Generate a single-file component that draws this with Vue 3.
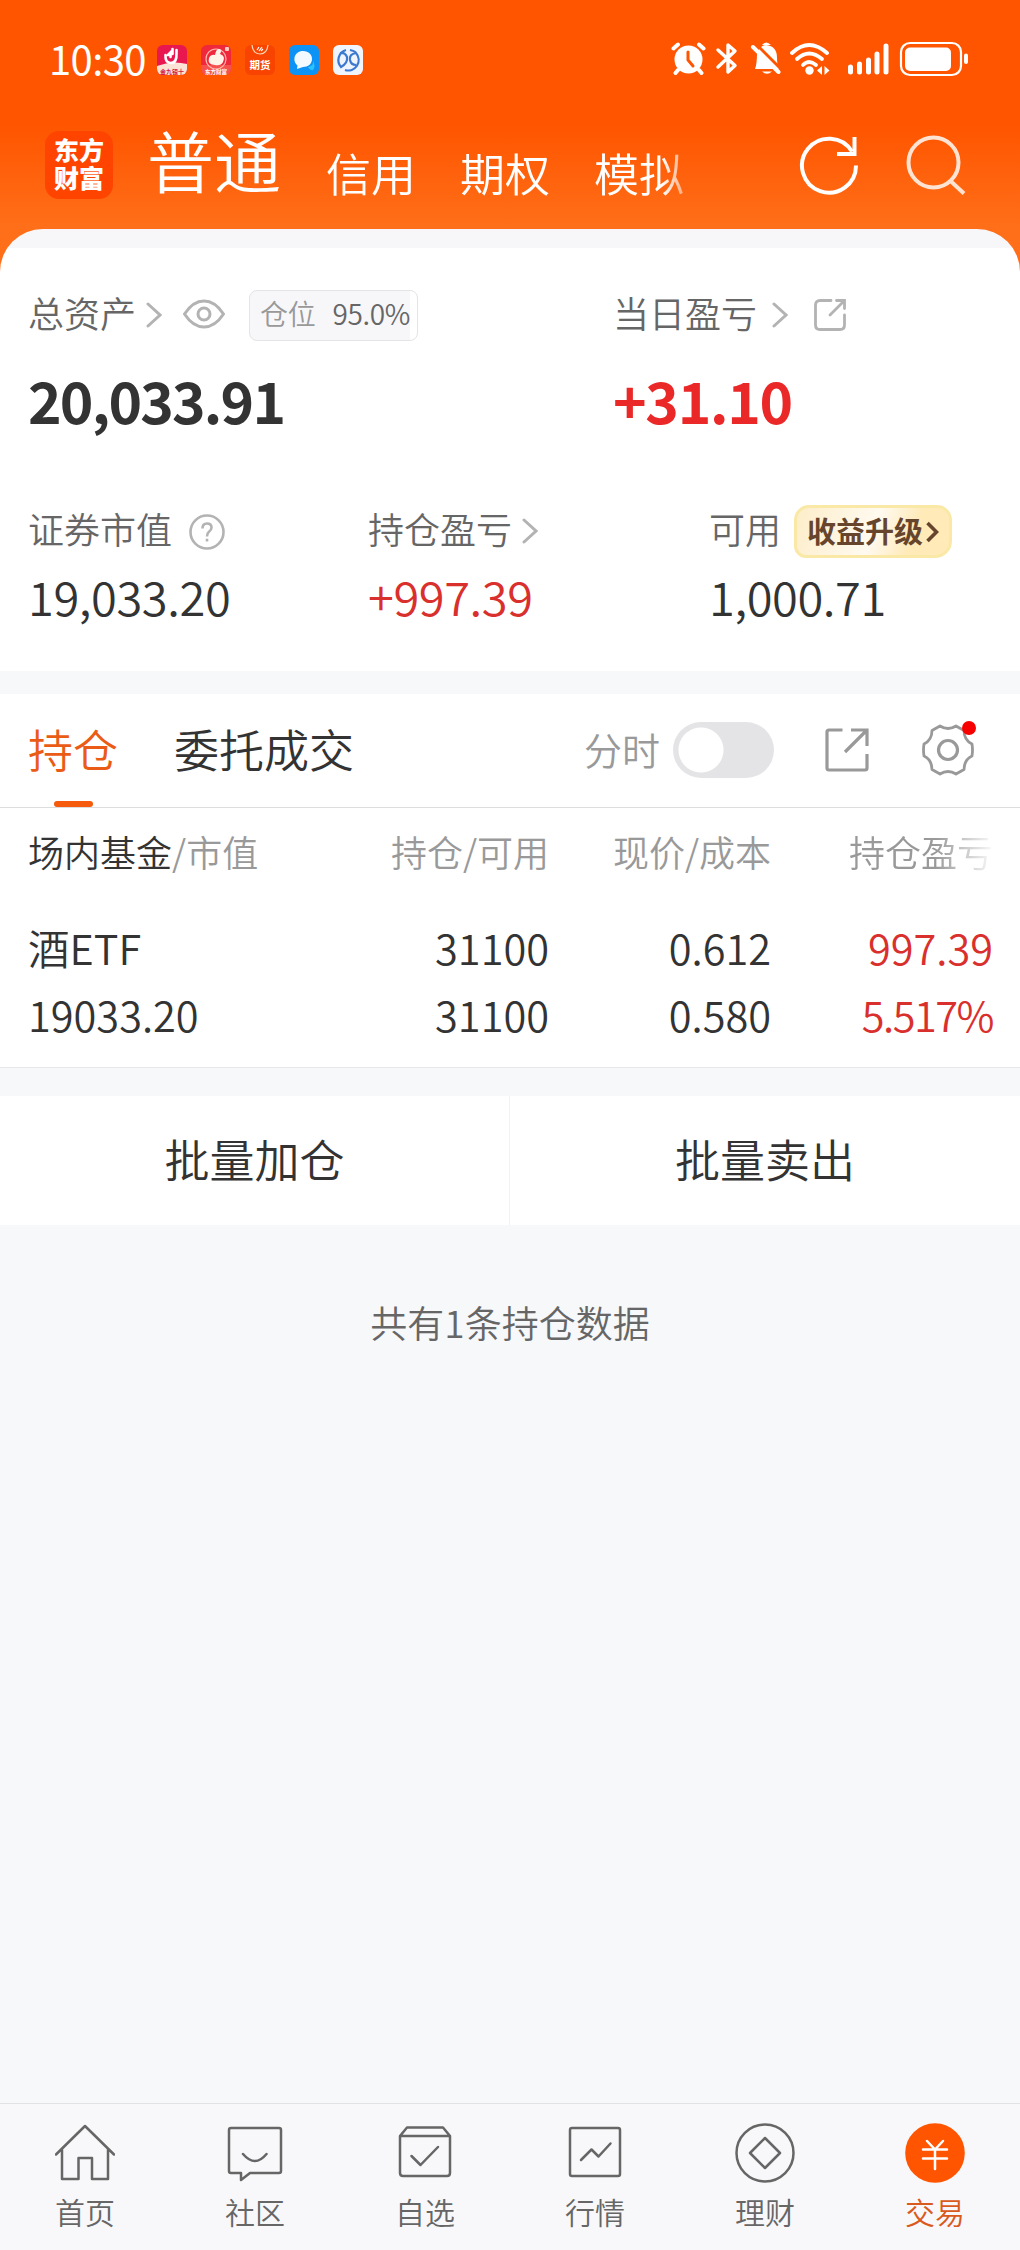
<template>
  <div class="page">
    <div class="status-bar">
      <span class="time">10:30</span>
      <div class="app-badges">
        <svg viewBox="0 0 30 30">
          <rect width="30" height="30" rx="6" fill="#e8174f" />
          <path d="M0 21 Q15 15 30 19 V24 a6 6 0 0 1 -6 6 H6 a6 6 0 0 1 -6 -6z" fill="#fbe3d6" />
          <path d="M8.500 10 Q8 18 14 18 Q20 18 19.500 8 L19.500 5 M15.500 9 V4 M11 10 L13.500 7.500 V12" fill="none" stroke="#fff" stroke-width="2.600" stroke-linecap="round" />
          <text x="15" y="28.500" font-size="6" font-weight="700" text-anchor="middle" fill="#d31748">金九银十</text>
        </svg>
        <svg viewBox="0 0 30 30">
          <rect width="30" height="30" rx="6" fill="#f0283c" />
          <path d="M0 20 H30 V24 a6 6 0 0 1 -6 6 H6 a6 6 0 0 1 -6 -6z" fill="#f5514f" />
          <circle cx="15" cy="14" r="10" fill="none" stroke="#ffb9ae" stroke-width="1.2" />
          <path d="M14 10 Q15 3 19 4 Q21 6 19 9 Q25 11 22 17 Q20 21 14 20 Q6 20 8 13 Q10 9 14 10z" fill="#fff3e8" />
          <rect x="24" y="2" width="4" height="4" rx="1" fill="#ffc8bd" />
          <text x="15" y="28.500" font-size="5.500" font-weight="700" text-anchor="middle" fill="#fff">东方财富</text>
        </svg>
        <svg viewBox="0 0 30 30">
          <rect width="30" height="30" rx="6" fill="#f84400" />
          <path d="M7 0 Q8 9 15 9 Q22 9 23 0" fill="none" stroke="#ffd9b8" stroke-width="1.2" />
          <path d="M12 5 L14 2 M14 6 L17 2 M16 6 L18 4" stroke="#fff" stroke-width="1.2" />
          <text x="15" y="24" font-size="10.500" font-weight="700" text-anchor="middle" fill="#fff">期货</text>
        </svg>
        <svg viewBox="0 0 30 30">
          <rect width="30" height="30" rx="6" fill="#0c93f5" />
          <path d="M19 22 Q25 21 24 16 Q27 21 24 25 Q21 26 19 22z" fill="#2bc4ff" />
          <path d="M14 6 C20 6 23 10 23 14 C23 19 19 22 14 22 L8 24 L8.500 20.500 C3 16 5 6 14 6z" fill="#f3faff" />
        </svg>
        <svg viewBox="0 0 30 30">
          <rect width="30" height="30" rx="6" fill="#f0f4fc" />
          <g fill="none" stroke="#3b78d0" stroke-width="2.200">
            <path d="M13 5 A10.500 10.500 0 0 0 8 22 Q15 18 14 12 Q12 7 7 8" />
            <path d="M12 25 A10.500 10.500 0 0 0 23 8 Q16 9 17 15 Q18 20 23 20 M17 5 Q22 6 23 8" />
          </g>
        </svg>
      </div>
      <svg class="system-icons" viewBox="0 0 300 36">
        <!-- alarm -->
        <circle cx="17.500" cy="18.500" r="14" fill="#fff" />
        <path d="M2.500 7.500 L7 3.500 M32.500 7.500 L28 3.500 M7 29 L4.500 32 M28 29 L30.500 32" class="thick" />
        <path d="M17 11 V19 L22 25" fill="none" stroke="#ff5500" stroke-width="3" stroke-linecap="round" />
        <!-- bluetooth -->
        <path d="M47 9 L64 24.500 L57 31 V4 L64 10 L47 26" fill="none" stroke="#fff" stroke-width="3.400" stroke-linejoin="round" stroke-linecap="round" />
        <!-- muted bell -->
        <path d="M84 28 Q86 23 86 12 Q90 4 95 4 Q106 5 106 17 Q106 24 108 28z" fill="#fff" />
        <path d="M91 30.500 H101 Q96 35 91 30.500z M91 4 Q95 -1 100 4z" fill="#fff" />
        <path d="M85 3 L110 28" stroke="#ff5500" stroke-width="3" />
        <path d="M82 6 L107.500 31" class="thick" />
        <!-- wifi -->
        <g fill="none" stroke="#fff" stroke-width="3.800" stroke-linecap="round">
          <path d="M121 12 Q138 -4 156 12" />
          <path d="M126 18 Q138 7 151 18" />
          <path d="M132 24 Q138 18 145 24" />
        </g>
        <circle cx="138.500" cy="29.500" r="4.200" fill="#fff" />
        <path d="M151 25 V34 L146 29.500z M153.500 25 V34 L158.500 29.500z" fill="#fff" />
        <!-- signal -->
        <path d="M179.500 26 V31 M188.500 23 V31 M197.500 19 V31 M206 13 V31 M215 5 V31" stroke="#fff" stroke-width="5" stroke-linecap="round" />
        <!-- battery -->
        <rect x="230" y="2" width="60" height="32" rx="9" fill="none" stroke="#fff" stroke-width="2.200" />
        <rect x="234" y="6.500" width="46" height="23.500" rx="5" fill="#fff" />
        <path d="M295 14.500 V21" stroke="#fff" stroke-width="4" stroke-linecap="round" />
      </svg>
    </div>

    <header class="title-bar">
      <div class="logo"><span>东方财富</span></div>
      <nav class="accounts">
        <span class="account active">普通</span>
        <span v-for="a in accounts" :key="a" class="account">{{ a }}</span>
      </nav>
      <svg class="refresh" viewBox="0 0 60 60" fill="none" stroke="#fff" stroke-width="4">
        <path d="M57 30.500 A27 27 0 1 1 53 16.500" />
        <path d="M55.500 2 V19 H38" />
      </svg>
      <svg class="search" viewBox="0 0 60 60" fill="none" stroke="#ffe3d2" stroke-width="4">
        <circle cx="27.500" cy="27.500" r="25" />
        <path d="M44.500 46 L58 58.500" />
      </svg>
    </header>

    <section class="assets">
      <div class="summary">
        <div>
          <div class="label">
            总资产
            <svg class="chevron total" viewBox="0 0 16 26"><path d="M2 2 L14 13 L2 24" /></svg>
            <svg class="eye" viewBox="0 0 42 30" fill="none" stroke="#b3b3b3" stroke-width="3">
              <path d="M1.500 15 Q10 2 21 2 Q32 2 40.500 15 Q32 28 21 28 Q10 28 1.500 15z" stroke-linejoin="round" />
              <circle cx="21" cy="15" r="6" />
            </svg>
            <span class="position"><em>仓位</em>95.0%</span>
          </div>
          <div class="big">20,033.91</div>
        </div>
        <div>
          <div class="label">
            当日盈亏
            <svg class="chevron daily" viewBox="0 0 16 26"><path d="M2 2 L14 13 L2 24" /></svg>
            <svg class="share-small" viewBox="0 0 32 32" fill="none" stroke="#b3b3b3" stroke-width="2.800" stroke-linecap="round">
              <path d="M17 1.500 H6 Q1.500 1.500 1.500 6 V26 Q1.500 30.500 6 30.500 H26 Q30.500 30.500 30.500 26 V16" />
              <path d="M22.500 1.500 H30.500 V9.500 M30 2 L16 16" />
            </svg>
          </div>
          <div class="big red">+31.10</div>
        </div>
      </div>
      <div class="details">
        <div>
          <div class="label">
            证券市值
            <svg class="help" viewBox="0 0 36 36" fill="none" stroke="#b3b3b3" stroke-width="2.600">
              <circle cx="18" cy="18" r="16.500" />
              <path d="M13.500 14.500 Q13.500 9.500 18 9.500 Q22.500 9.500 22.500 13.500 Q22.500 16 20 17.800 Q18 19.500 18 22.500 M18 24.800 V27.600" />
            </svg>
          </div>
          <div class="value">19,033.20</div>
        </div>
        <div>
          <div class="label">
            持仓盈亏
            <svg class="chevron held" viewBox="0 0 16 26"><path d="M2 2 L14 13 L2 24" /></svg>
          </div>
          <div class="value red">+997.39</div>
        </div>
        <div>
          <div class="label">
            可用
            <span class="upgrade">收益升级<svg viewBox="0 0 14 22"><path d="M2.500 2 L11.500 11 L2.500 20" fill="none" stroke="#67452c" stroke-width="3.600" /></svg></span>
          </div>
          <div class="value">1,000.71</div>
        </div>
      </div>
    </section>

    <section class="holdings">
      <div class="tabs">
        <span class="tab active">持仓</span>
        <span class="tab">委托成交</span>
        <span class="minute">分时</span>
        <span class="switch"></span>
        <svg class="share" viewBox="0 0 44 44" fill="none" stroke="#999" stroke-width="3.200">
          <path d="M17.500 2 H4 Q2 2 2 4 V40 Q2 42 4 42 H40 Q42 42 42 40 V26" />
          <path d="M26 2 H42 V18 M41.500 2.500 L20 24" />
        </svg>
        <span class="gear">
          <svg viewBox="0 0 52 52" fill="none" stroke="#999" stroke-width="2.800" stroke-linejoin="round">
            <path d="M18 2 Q26 7 34 2 L42 6.500 Q42 16 50 20 Q51 26 50 32 Q42 36 42 45.500 L34 50 Q26 45 18 50 L10 45.500 Q10 36 2 32 Q1 26 2 20 Q10 16 10 6.500z" />
            <circle cx="26" cy="26" r="9.500" stroke-width="3.200" />
          </svg>
        </span>
      </div>
      <div class="grid head">
        <span><b>场内基金</b>/市值</span>
        <span>持仓/可用</span>
        <span>现价/成本</span>
        <span class="fade">持仓盈亏</span>
      </div>
      <div class="rows">
        <div v-for="(row, i) in rows" :key="i" class="grid row">
          <span
            v-for="(cell, j) in row"
            :key="j"
            :class="{ red: j === 3, percent: cell.endsWith('%') }"
          >{{ cell }}</span>
        </div>
      </div>
    </section>

    <div class="batch">
      <button>批量加仓</button>
      <button>批量卖出</button>
    </div>

    <p class="count">共有1条持仓数据</p>

    <footer class="nav">
      <div v-for="item in navItems" :key="item.name" class="nav-item" :class="{ active: item.active }">
        <svg viewBox="0 0 60 60" fill="none" stroke="#666" stroke-width="2.500" stroke-linejoin="round" stroke-linecap="round">
          <circle v-if="item.active" cx="30" cy="30" r="29.800" fill="#ff5500" stroke="none" />
          <circle v-if="item.round" cx="30" cy="30" r="28.500" />
          <path :d="item.path" />
        </svg>
        <span>{{ item.name }}</span>
      </div>
    </footer>
  </div>
</template>

<script setup>
const accounts = ['信用', '期权', '模拟']

const rows = [
  ['酒ETF', '31100', '0.612', '997.39'],
  ['19033.20', '31100', '0.580', '5.517%'],
]

const navItems = [
  { name: '首页', path: 'M1 31.500 L30 3 L59 31.500 M7 26.500 V56 H23.500 V35 H37 V56 H53 V26.500' },
  { name: '社区', path: 'M6 5 H54 Q56 5 56 7 V48 Q56 50 54 50 H25 L16 57 V50 H6 Q4 50 4 48 V7 Q4 5 6 5z M18 31 Q30 45 41.500 31' },
  { name: '自选', path: 'M5 13 H55 V50 Q55 53 52 53 H8 Q5 53 5 50z M5 13 L12 4.500 H48 L55 13 M16.500 33 L25.500 42 L43 24' },
  { name: '行情', path: 'M7 5 H53 Q55 5 55 7 V51 Q55 53 53 53 H7 Q5 53 5 51 V7 Q5 5 7 5z M16 37 L26.500 26.500 L33.500 33.500 L45.500 20.500' },
  { name: '理财', round: true, path: 'M30 15 L45 30 L30 45 L15 30z' },
  { name: '交易', active: true, path: 'M22 18 L30 26.500 L38 18 M18 26.500 H42 M18 35.500 H42 M30 26.500 V46' },
]
</script>

<style>
body {
  background: #f7f8fa;
}
</style>

<style scoped>
.page {
  width: 1020px;
  height: 2250px;
  display: flex;
  flex-direction: column;
  overflow: hidden;
  font-family: "Noto Sans CJK SC", sans-serif;
  font-weight: 350;
  color: #333;
  background: #f7f8fa linear-gradient(#ff5500 125px, #ff6f19 229px) no-repeat 0 0 / 100% 280px;
}
svg {
  display: block;
  flex: none;
}
.red {
  color: #d9302e;
}

/* status bar */
.status-bar {
  height: 120px;
  display: flex;
  align-items: center;
  padding-left: 49px;
}
.time {
  width: 108px;
  margin-bottom: 5px;
  font-size: 40px;
  font-weight: 400;
  line-height: 50px;
  letter-spacing: -0.6px;
  color: #fff;
}
.app-badges {
  display: flex;
  gap: 14px;
}
.app-badges svg {
  width: 30px;
  height: 30px;
}
.system-icons {
  width: 300px;
  height: 36px;
  margin: 0 49px 2px auto;
}
.thick {
  fill: none;
  stroke: #fff;
  stroke-width: 4;
  stroke-linecap: round;
}

/* title bar */
.title-bar {
  height: 90px;
  margin-bottom: 19px;
  display: flex;
  align-items: center;
  padding-left: 45px;
  color: #fff;
}
.logo {
  width: 68px;
  height: 68px;
  border-radius: 14px;
  background: #ff4400;
  display: flex;
  align-items: center;
  justify-content: center;
}
.logo span {
  width: 50px;
  margin-bottom: 5px;
  font-size: 25px;
  font-weight: 900;
  line-height: 28px;
}
.accounts {
  display: flex;
  align-items: center;
  gap: 44px;
  margin-left: 34px;
  width: 540px;
  mask-image: linear-gradient(90deg, #000 515px, transparent 555px);
}
.account {
  font-size: 45px;
  line-height: 60px;
  margin-top: 15px;
}
.account.active {
  font-size: 67px;
  line-height: 80px;
  margin: 0 1px 12px 0;
}
.refresh {
  width: 60px;
  height: 60px;
  margin-left: 112px;
}
.search {
  width: 60px;
  height: 60px;
  margin-left: 47px;
}

/* assets */
.assets {
  height: 442px;
  box-sizing: border-box;
  padding: 53px 0 0 28px;
  border-radius: 43px 43px 0 0;
  background: linear-gradient(#f7f7fa 19px, #fff 19px);
}
.summary {
  display: grid;
  grid-template-columns: 585px auto;
  height: 216px;
}
.label {
  display: flex;
  align-items: center;
  height: 60px;
  font-size: 36px;
  line-height: 56px;
  color: #666;
}
.chevron {
  width: 16px;
  height: 26px;
  fill: none;
  stroke: #b3b3b3;
  stroke-width: 3;
  stroke-linecap: round;
}
.chevron.total {
  margin: 5px 21px 0 10px;
}
.chevron.daily {
  margin: 5px 26px 0 15px;
}
.chevron.held {
  margin: 5px 0 0 10px;
}
.eye {
  width: 42px;
  height: 30px;
  margin-top: 3px;
}
.position {
  box-sizing: border-box;
  width: 169px;
  height: 51px;
  margin: 7px 0 0 24px;
  padding-left: 10px;
  border: 1px solid #e4e4e6;
  border-radius: 8px;
  background: linear-gradient(90deg, #f7f7fa 160px, #fff 160px);
  font-size: 28px;
  line-height: 45px;
  letter-spacing: -0.3px;
  white-space: nowrap;
}
.position em {
  margin-right: 17px;
  font-style: normal;
  color: #999;
}
.share-small {
  width: 32px;
  height: 32px;
  margin-top: 6px;
}
.big {
  margin-top: 22px;
  font-size: 57px;
  font-weight: 700;
  line-height: 70px;
  letter-spacing: -1.8px;
}
.big.red {
  letter-spacing: -1.3px;
  color: #ea2827;
}
.details {
  display: grid;
  grid-template-columns: 340px 341px auto;
}
.help {
  width: 36px;
  height: 36px;
  margin: 7px 0 0 17px;
}
.upgrade {
  box-sizing: border-box;
  width: 158px;
  height: 53px;
  margin: 6px 0 0 13px;
  padding: 0 0 3px 10px;
  display: flex;
  align-items: center;
  gap: 2px;
  border: 3px solid #fae9a6;
  border-radius: 15px 15px 17px 12px;
  background: linear-gradient(110deg, #fdedc9, #fffaf0 50%, #ffeab8 75%);
  font-size: 29px;
  font-weight: 700;
  line-height: 40px;
  color: #67452c;
}
.upgrade svg {
  width: 14px;
  height: 22px;
  margin-top: 4px;
}
.value {
  margin-top: 8px;
  font-size: 47px;
  line-height: 60px;
  letter-spacing: -0.4px;
}

/* holdings */
.holdings {
  margin-top: 23px;
  background: #fff;
  border-bottom: 1px solid #e8e8ea;
}
.tabs {
  height: 113px;
  display: flex;
  align-items: center;
  padding-left: 28px;
  border-bottom: 1px solid #ddd;
}
.tab {
  position: relative;
  height: 113px;
  margin-right: 56px;
  font-size: 45px;
  line-height: 109px;
}
.tab.active {
  color: #ea5c16;
}
.tab.active::after {
  content: "";
  position: absolute;
  left: 26px;
  bottom: 0;
  width: 39px;
  height: 6px;
  border-radius: 3px;
  background: #f55a0d;
}
.minute {
  margin: 0 0 4px 174px;
  font-size: 38px;
  color: #999;
}
.switch {
  width: 101px;
  height: 56px;
  margin: 0 0 2px 13px;
  border-radius: 28px;
  background: radial-gradient(circle at 28px 28px, #fff 22px, #e4e4e6 23px);
}
.share {
  width: 44px;
  height: 44px;
  margin: 0 0 2px 51px;
}
.gear {
  position: relative;
  margin: 0 0 1px 53px;
}
.gear svg {
  width: 52px;
  height: 52px;
}
.gear::after {
  content: "";
  position: absolute;
  top: -3px;
  right: -2px;
  width: 14px;
  height: 14px;
  border-radius: 50%;
  background: #f60000;
}
.grid {
  display: grid;
  grid-template-columns: 299px 222px 222px 222px;
  padding-left: 28px;
}
.grid span:not(:first-child) {
  text-align: right;
}
.head {
  height: 89px;
  font-size: 36px;
  line-height: 87px;
  color: #999;
}
.head b {
  font-weight: inherit;
  color: #333;
}
.fade {
  mask-image: linear-gradient(90deg, #000 165px, transparent 225px);
}
.rows {
  height: 153px;
  padding-top: 17px;
}
.row {
  font-size: 41.5px;
  line-height: 67px;
}
.row .percent {
  letter-spacing: -1.5px;
}

/* batch buttons */
.batch {
  height: 129px;
  margin-top: 28px;
  display: grid;
  grid-template-columns: 509px 1fr;
  background: #fff;
}
.batch button {
  border: 0;
  padding: 0 0 5px;
  background: none;
  font: inherit;
  font-size: 45px;
  color: #333;
}
.batch button + button {
  border-left: 1px solid #f2f2f4;
}
.count {
  margin: 69px 0 0;
  font-size: 37px;
  line-height: 56px;
  text-align: center;
  color: #666;
}

/* bottom navigation */
.nav {
  height: 147px;
  margin-top: auto;
  box-sizing: border-box;
  display: flex;
  border-top: 1px solid #e2e2e4;
  background: #f8f8fa;
}
.nav-item {
  flex: 1;
  display: flex;
  flex-direction: column;
  align-items: center;
  padding-top: 19px;
  font-size: 30px;
  line-height: 40px;
  color: #666;
}
.nav-item svg {
  width: 60px;
  height: 60px;
}
.nav-item span {
  margin-top: 8px;
}
.nav-item.active {
  color: #d95a1c;
}
.nav-item.active path {
  stroke: #fff;
}
</style>
